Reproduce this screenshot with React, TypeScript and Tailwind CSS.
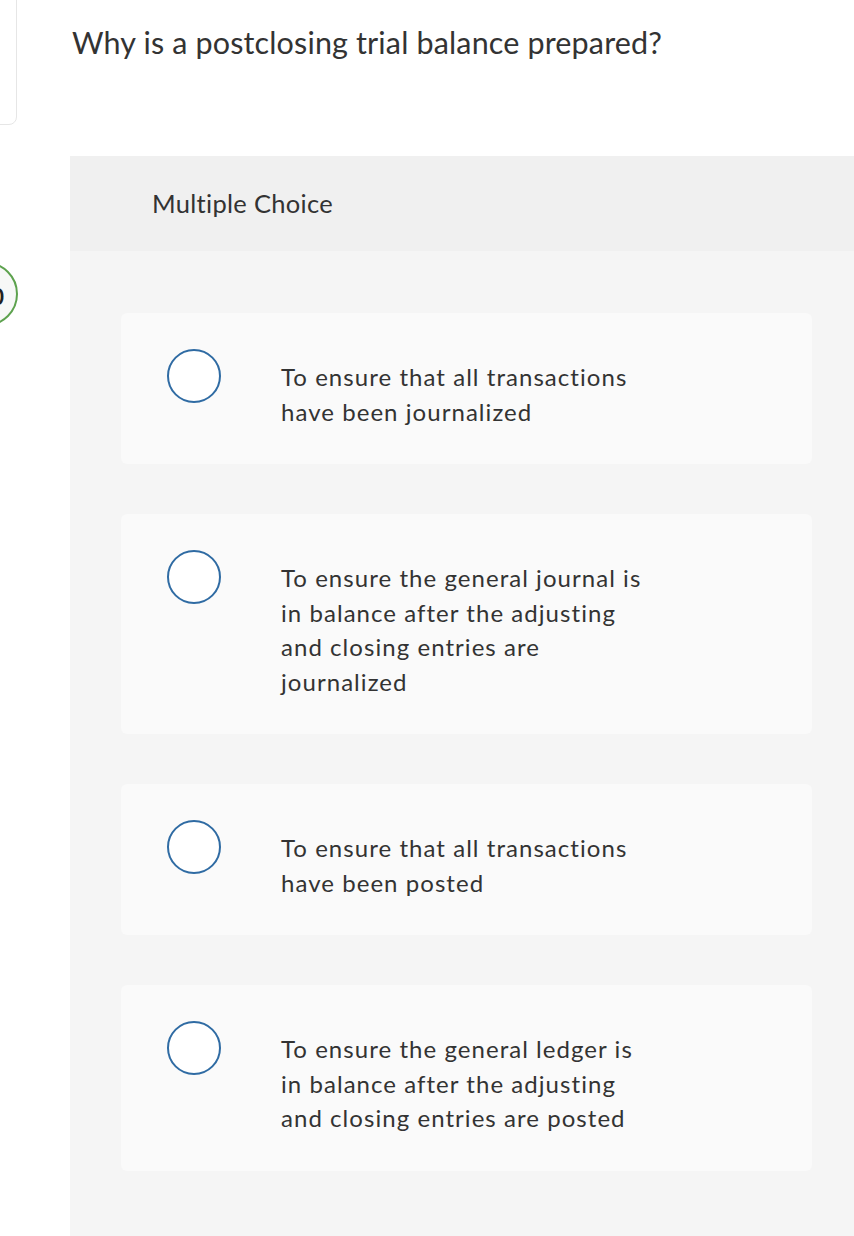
import React from "react";

const options: string[][] = [
  ["To ensure that all transactions", "have been journalized"],
  [
    "To ensure the general journal is",
    "in balance after the adjusting",
    "and closing entries are",
    "journalized",
  ],
  ["To ensure that all transactions", "have been posted"],
  [
    "To ensure the general ledger is",
    "in balance after the adjusting",
    "and closing entries are posted",
  ],
];

export default function App() {
  return (
    <div
      className="relative w-[854px] h-[1236px] overflow-hidden bg-white text-[#333333]"
      style={{ fontFamily: "Lato, 'Open Sans', sans-serif" }}
    >
      <div className="flex">
        {/* left rail */}
        <div className="w-[18px] shrink-0 flex flex-col">
          <div className="ml-[-100px] mt-[-10px] w-[117px] h-[135px] border border-[#e6e6e6] rounded-br-[8px] bg-white" />
          <div className="ml-[-46px] mt-[137px] w-[64px] h-[64px] rounded-full border-2 border-[#5da24e] bg-[#f7f8f7] flex items-center justify-end pr-[12px]">
            <span className="text-[22px] font-bold text-[#222] leading-none mt-[6px]">10</span>
          </div>
        </div>

        {/* main */}
        <div className="ml-[52px] flex flex-col">
          <h1 className="pl-[2px] pt-[22px] text-[30.5px] leading-[40px] font-normal text-[#333] whitespace-nowrap tracking-[0.15px]">
            Why is a postclosing trial balance prepared?
          </h1>

          <div className="mt-[94px] w-[793px] bg-[#f5f5f5] pb-[100px]">
            <div className="h-[95px] bg-[#f0f0f0] flex items-center pl-[82px]">
              <span className="text-[25.5px] text-[#333] tracking-[0.3px]">Multiple Choice</span>
            </div>
            <div className="pt-[62px] px-[51px] flex flex-col gap-[50px]">
              {options.map((lines, i) => (
                <div
                  key={i}
                  className="w-[691px] bg-[#fafafa] rounded-[6px] flex pt-[36px] pb-[35px] pl-[46px]"
                >
                  <div className="w-[54px] h-[54px] shrink-0 rounded-full border-2 border-[#2f6ba3] bg-white" />
                  <p className="ml-[60px] mt-[11px] text-[24px] leading-[34.5px] text-[#333] tracking-[1.05px] whitespace-nowrap">
                    {lines.map((l, j) => (
                      <React.Fragment key={j}>
                        {l}
                        {j < lines.length - 1 && <br />}
                      </React.Fragment>
                    ))}
                  </p>
                </div>
              ))}
            </div>
          </div>
        </div>
      </div>
    </div>
  );
}
